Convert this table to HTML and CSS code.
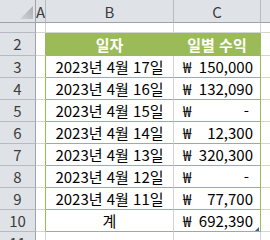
FILE: index.html
```html
<!DOCTYPE html>
<html lang="ko">
<head>
<meta charset="utf-8">
<link rel="stylesheet" href="styles.css">
</head>
<body>
<div class="sheet">
  <div class="corner"><svg class="corner-tri" width="16" height="16" viewBox="0 0 16 16"><defs><linearGradient id="g" x1="0" y1="1" x2="1" y2="0"><stop offset="0" stop-color="#d0d3d6"/><stop offset="1" stop-color="#a9adb2"/></linearGradient></defs><polygon points="15,1 15,14 2,14" fill="url(#g)"/></svg></div>
  <div class="colhead">A</div>
  <div class="colhead">B</div>
  <div class="colhead">C</div>
  <div class="colhead last"></div>

  <div class="rowhead small"></div>
  <div class="cell"></div>
  <div class="cell"></div>
  <div class="cell"></div>
  <div class="cell"></div>

  <div class="rowhead">2</div>
  <div class="cell gl"></div>
  <div class="cell th">일자</div>
  <div class="cell th thc">일별 수익</div>
  <div class="cell"></div>

  <div class="rowhead">3</div>
  <div class="cell gl"></div>
  <div class="cell td date">2023년 4월 17일</div>
  <div class="cell td amt"><span>₩</span><span>150,000</span></div>
  <div class="cell"></div>

  <div class="rowhead">4</div>
  <div class="cell gl"></div>
  <div class="cell td date">2023년 4월 16일</div>
  <div class="cell td amt"><span>₩</span><span>132,090</span></div>
  <div class="cell"></div>

  <div class="rowhead">5</div>
  <div class="cell gl"></div>
  <div class="cell td date">2023년 4월 15일</div>
  <div class="cell td amt"><span>₩</span><span class="dash">-</span></div>
  <div class="cell"></div>

  <div class="rowhead">6</div>
  <div class="cell gl"></div>
  <div class="cell td date">2023년 4월 14일</div>
  <div class="cell td amt"><span>₩</span><span>12,300</span></div>
  <div class="cell"></div>

  <div class="rowhead">7</div>
  <div class="cell gl"></div>
  <div class="cell td date">2023년 4월 13일</div>
  <div class="cell td amt"><span>₩</span><span>320,300</span></div>
  <div class="cell"></div>

  <div class="rowhead">8</div>
  <div class="cell gl"></div>
  <div class="cell td date">2023년 4월 12일</div>
  <div class="cell td amt"><span>₩</span><span class="dash">-</span></div>
  <div class="cell"></div>

  <div class="rowhead">9</div>
  <div class="cell gl"></div>
  <div class="cell td date">2023년 4월 11일</div>
  <div class="cell td amt"><span>₩</span><span>77,700</span></div>
  <div class="cell"></div>

  <div class="rowhead">10</div>
  <div class="cell gl"></div>
  <div class="cell td date">계</div>
  <div class="cell td amt sel"><span>₩</span><span>692,390</span><svg class="handle" width="4" height="4" viewBox="0 0 4 4"><polygon points="4,0 4,4 0,4" fill="#3a5aa6"/></svg></div>
  <div class="cell"></div>

  <div class="rowhead">11</div>
  <div class="cell"></div>
  <div class="cell"></div>
  <div class="cell"></div>
  <div class="cell"></div>
</div>
</body>
</html>
```

FILE: styles.css
```css
html, body {
  margin: 0;
  padding: 0;
  background: #ffffff;
  overflow: hidden;
}
.sheet {
  display: grid;
  grid-template-columns: 36px 10px 128px 87px 20px;
  grid-template-rows: 23px 10px 23px repeat(8, 22px) 22px;
  font-family: "Noto Sans CJK KR", "Noto Sans", sans-serif;
  font-size: 15px;
  color: #000;
  width: 270px;
  height: 240px;
  overflow: hidden;
}
.sheet > div {
  box-sizing: border-box;
  border-right: 1px solid #d4d4d4;
  border-bottom: 1px solid #d4d4d4;
  display: flex;
  align-items: center;
  justify-content: center;
  white-space: nowrap;
  overflow: hidden;
  line-height: 1;
}
.sheet > .corner {
  background: #dfe3e8;
  border-right: 1px solid #9ea3aa;
  border-bottom: 1px solid #9ea3aa;
  justify-content: flex-end;
  align-items: flex-end;
}
.corner-tri {
  display: block;
  margin: 0 1px 1px 0;
}
.sheet > .colhead {
  background: #dfe3e8;
  border-right: 1px solid #b6bbc1;
  border-bottom: 1px solid #9ea3aa;
  color: #3c3c3c;
  font-size: 15px;
}
.sheet > .rowhead {
  background: #dfe3e8;
  border-right: 1px solid #9ea3aa;
  border-bottom: 1px solid #b6bbc1;
  color: #3c3c3c;
  font-size: 15px;
  align-items: flex-start;
  padding-top: 3px;
}
.sheet > .rowhead.small {
  padding-top: 0;
}
.sheet > .gl {
  border-right-color: #9bbb59;
}
.sheet > .th {
  background: #9bbb59;
  color: #ffffff;
  font-weight: bold;
  border-right-color: #9bbb59;
  border-bottom-color: #9bbb59;
}
.sheet > .td {
  border-bottom-color: #9bbb59;
}
.sheet > .thc,
.sheet > .amt {
  border-right-color: #9bbb59;
}
.sheet > .amt {
  justify-content: space-between;
  padding: 0 7px 0 9px;
  position: relative;
}
.dash {
  padding-right: 4px;
}
.handle {
  position: absolute;
  right: 1px;
  bottom: 0;
}
```
